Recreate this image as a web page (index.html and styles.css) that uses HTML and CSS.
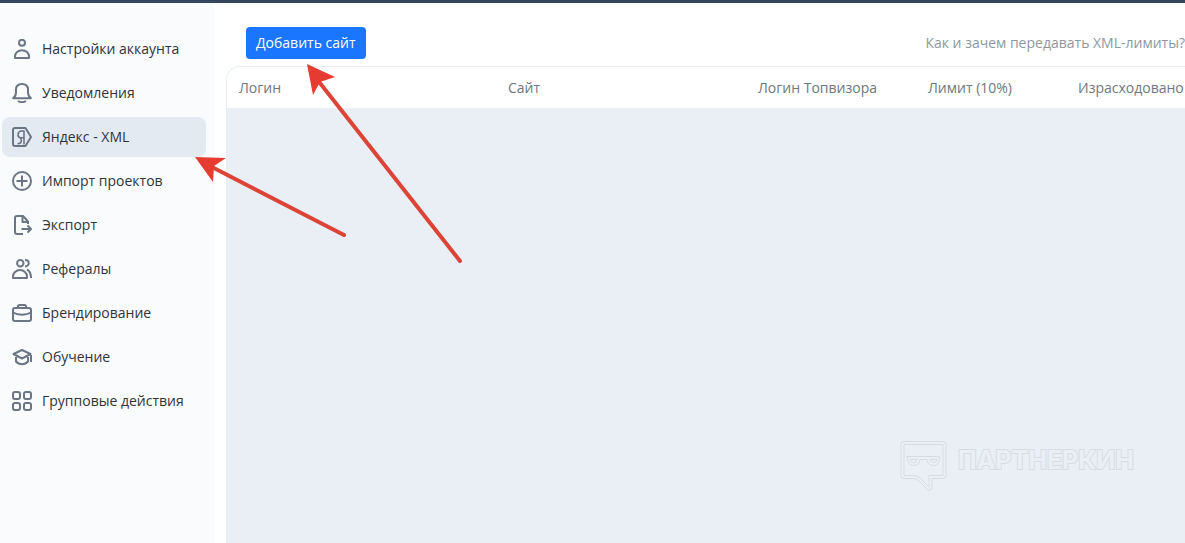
FILE: index.html
```html
<!DOCTYPE html>
<html lang="ru">
<head>
<meta charset="utf-8">
<title>Яндекс - XML</title>
<link rel="stylesheet" href="styles.css">
</head>
<body>
<div class="topbar"></div>
<div class="layout">
  <nav class="sidebar">
    <a class="item" href="#"><svg class="icon" viewBox="0 0 20 20"><circle cx="10" cy="3.8" r="3"/><path d="M3 19v-1.5a7 6.3 0 0 1 14 0V19z"/></svg>Настройки аккаунта</a>
    <a class="item" href="#"><svg class="icon" viewBox="0 0 20 20"><path d="M1.2 15.2C3 14 4 12 4 9V6.500C4 3 6.500 1 10 1s6 2 6 5.500V9c0 3 1 5 2.800 6.200z"/><path d="M6 18c2 1.500 6 1.500 8 0"/></svg>Уведомления</a>
    <a class="item active" href="#"><svg class="icon" viewBox="0 0 20 20"><path d="M3 1h10.500L19 10l-5.500 9H3a2 2 0 0 1-2-2V3a2 2 0 0 1 2-2z"/><path class="fine" d="M12 17.500V4H9.500a3.600 3.600 0 0 0-1.500 6.800q1.500.7 1.300 3.200-.2 2.800-3.800 2.800M8 10.800h4"/></svg>Яндекс - XML</a>
    <a class="item" href="#"><svg class="icon" viewBox="0 0 20 20"><circle cx="10" cy="10" r="9"/><path d="M10 4.500v11M4.500 10h11"/></svg>Импорт проектов</a>
    <a class="item" href="#"><svg class="icon" viewBox="0 0 20 20"><path d="M11 19H5a2 2 0 0 1-2-2V3a2 2 0 0 1 2-2h6l5 5.500V9"/><path d="M10.500 1v6H16M9.500 14H19M15.500 10.500 19 14l-3.500 3.500"/></svg>Экспорт</a>
    <a class="item" href="#"><svg class="icon" viewBox="0 0 20 20"><circle cx="8.300" cy="4.200" r="3.200"/><path d="M1 19v-1.500a7 6.500 0 0 1 14 0V19zM13 1c5 0 5 6.400 0 6.400M15 10.500c3 1.500 4 4 4 8.500"/></svg>Рефералы</a>
    <a class="item" href="#"><svg class="icon" viewBox="0 0 20 20"><rect x="1" y="5" width="18" height="13" rx="2"/><path d="M6 5V3.500Q6 2 7.500 2h5Q14 2 14 3.500V5M1 9.500c5 3 13 3 18 0"/></svg>Брендирование</a>
    <a class="item" href="#"><svg class="icon" viewBox="0 0 20 20"><path d="M1.500 7 10 3l8.500 4L10 11.500zM4 8.500v6c3 3.500 9 3.500 12 0v-6M19 8v3M19 11v4"/></svg>Обучение</a>
    <a class="item" href="#"><svg class="icon" viewBox="0 0 20 20"><rect x="1" y="1" width="7" height="7" rx="2"/><rect x="12" y="1" width="7" height="7" rx="2"/><rect x="1" y="12" width="7" height="7" rx="2"/><rect x="12" y="12" width="7" height="7" rx="2"/></svg>Групповые действия</a>
  </nav>
  <main class="content">
    <header class="toolbar">
      <button class="add" type="button">Добавить сайт</button>
      <a class="help" href="#">Как и зачем передавать XML-лимиты?</a>
    </header>
    <section class="panel">
      <table class="sites">
        <colgroup><col class="c-login"><col class="c-site"><col class="c-top"><col class="c-limit"><col></colgroup>
        <thead><tr><th>Логин</th><th>Сайт</th><th>Логин Топвизора</th><th>Лимит (10%)</th><th>Израсходовано</th></tr></thead>
      </table>
    </section>
  </main>
</div>
<svg class="arrows" width="480" height="280" viewBox="0 0 480 280">
  <path class="shaft" d="M344 235 210 166M460 261 316 78"/>
  <path class="head" d="M195 157l31 1-12 8-1 16zM307 64l28 13-15 5-7 13z"/>
</svg>
<div class="watermark">
  <svg class="mark" width="48" height="52" viewBox="0 0 48 52">
    <path d="M4 1.500h39q3 0 3 3v31q0 3-3 3H32V48q-1 3-4 2L19 41q-3-2.500-6-2.500H4q-3 0-3-3v-31q0-3 3-3z"/>
    <path d="M4 4.500h39v31H29V47L20 38q-3-2.500-7-2.500H4z"/>
    <path d="M6.500 16.500h33v3q-1 6-6 6-6 0-6.500-6h-7q-.5 6-6.500 6-5 0-6-6v-3zM10 19.500h7q-.5 3-3.500 3-3 0-3.500-3zM30 19.500h7q-.5 3-3.500 3-3 0-3.500-3z"/>
  </svg>
  <span class="brand">ПАРТНЕРКИН</span>
</div>
</body>
</html>
```
FILE: styles.css
```css
* { box-sizing: border-box; }
body {
  margin: 0;
  height: 100vh;
  display: flex;
  flex-direction: column;
  position: relative;
  overflow: hidden;
  background: #fff;
  font: 14px/20px "Open Sans", "Noto Sans", sans-serif;
}
.topbar { flex: none; height: 3px; background: #34495e; }
.layout { flex: 1; display: flex; min-height: 0; }
.sidebar {
  flex: none;
  width: 214px;
  padding: 26px 8px 0 2px;
  display: flex;
  flex-direction: column;
  gap: 4px;
  background: #fafbfd;
}
.item {
  display: flex;
  align-items: center;
  gap: 10px;
  height: 40px;
  padding: 0 10px;
  border-radius: 8px;
  color: #30343a;
  text-decoration: none;
  white-space: nowrap;
}
.active { background: #e4eaf2; }
.icon {
  flex: none;
  width: 20px;
  height: 20px;
  fill: none;
  stroke: #6b7685;
  stroke-width: 2;
  stroke-linejoin: round;
}
.fine { stroke-width: 1.6; }
.content {
  flex: 1;
  min-width: 0;
  display: flex;
  flex-direction: column;
  padding-left: 12px;
}
.toolbar {
  flex: none;
  display: flex;
  align-items: center;
  justify-content: space-between;
  padding: 24px 0 7px 20px;
}
.add {
  height: 32px;
  padding: 0 10px;
  border: 0;
  border-radius: 4px;
  background: #1a75ff;
  color: #fff;
  font: inherit;
}
.help { color: #8e989f; text-decoration: none; white-space: nowrap; }
.panel {
  flex: 1;
  overflow: hidden;
  border: 1px solid #e9eef5;
  border-width: 1px 0 0 1px;
  border-top-left-radius: 14px;
  background: #eaeff6;
}
.sites {
  width: 100%;
  table-layout: fixed;
  border-collapse: collapse;
  background: #fff;
}
.sites th {
  height: 41px;
  padding: 0 0 0 12px;
  color: #6f7780;
  font-weight: 400;
  text-align: left;
  white-space: nowrap;
}
.c-login { width: 269px; }
.c-site { width: 250px; }
.c-top { width: 170px; }
.c-limit { width: 150px; }
.arrows { position: absolute; left: 0; top: 0; pointer-events: none; }
.shaft { stroke: #dc4437; stroke-width: 4; stroke-linecap: round; }
.head { fill: #e63b30; }
.watermark {
  position: absolute;
  right: 51px;
  bottom: 51px;
  display: flex;
  align-items: flex-start;
  gap: 10px;
}
.mark { fill: none; stroke: #d8dce2; }
.brand {
  padding-top: 8px;
  color: #eaeff6;
  font: 700 25px/24px Inter, sans-serif;
  paint-order: stroke fill;
  -webkit-text-stroke: 2px #d8dce2;
}
```
